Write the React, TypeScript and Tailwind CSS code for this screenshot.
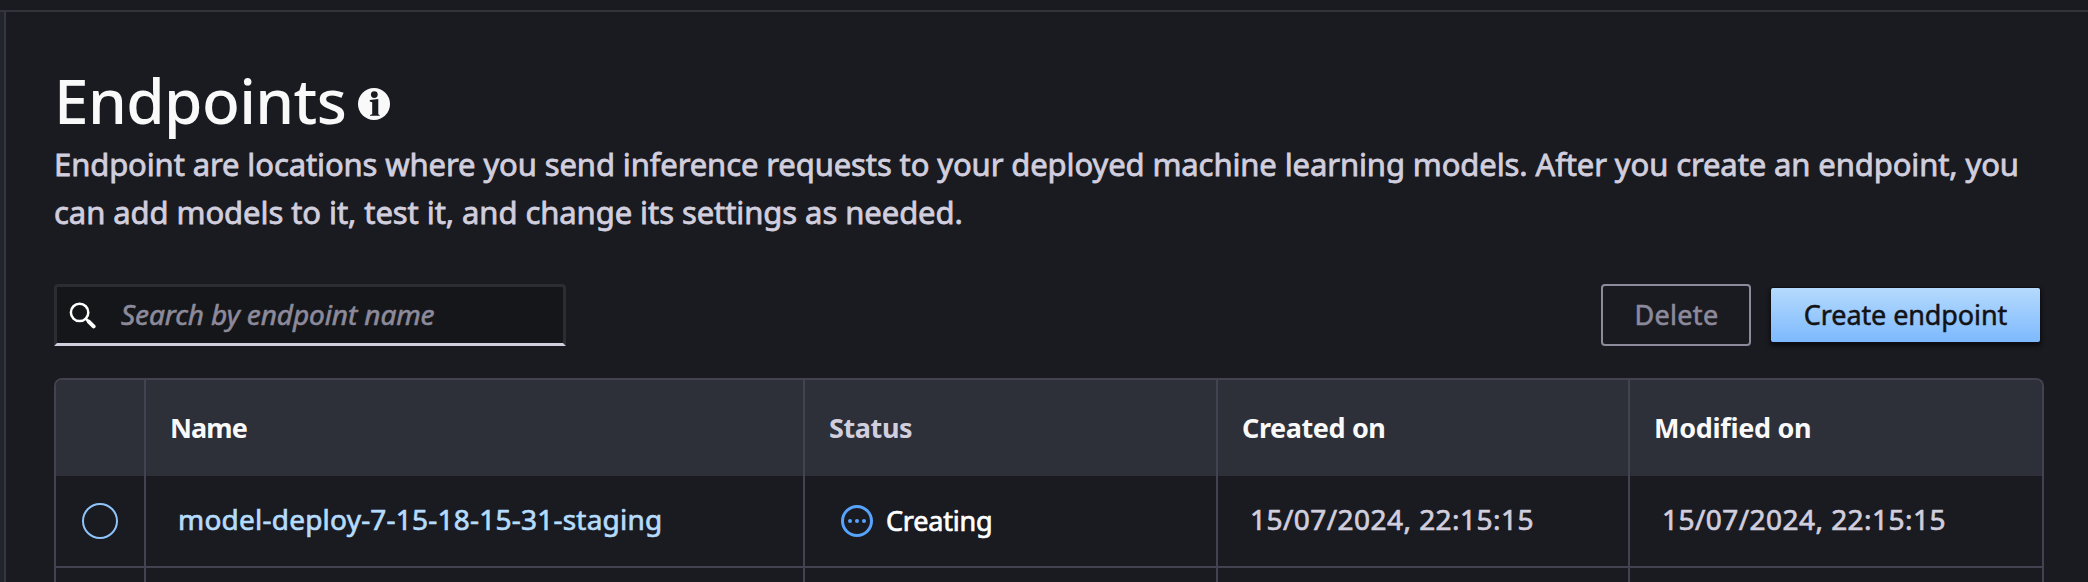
import type { ReactNode } from "react";

function InfoIcon() {
  return (
    <svg className="block h-8 w-8" viewBox="0 0 32 32" aria-hidden="true">
      <circle cx="16" cy="16" r="16" fill="#f9f9fa" />
      <circle cx="16.3" cy="6.6" r="3.4" fill="#1a1b20" />
      <path
        d="M11.8 12 L20.3 11 V26.2 L21.6 27 V27.8 H12 V27 L14.2 26.2 V14.2 L11.8 13.4 Z"
        fill="#1a1b20"
      />
    </svg>
  );
}

function SearchIcon() {
  return (
    <svg className="block h-7 w-7" viewBox="0 0 28 28" fill="none" stroke="#ffffff" aria-hidden="true">
      <circle cx="10.6" cy="11.4" r="8.7" strokeWidth="2.5" />
      <path d="M17 17.8 L19.5 20.3" strokeWidth="2.6" />
      <path d="M19.8 20.6 L24.6 25.4" strokeWidth="4" strokeLinecap="round" />
    </svg>
  );
}

function PendingIcon() {
  return (
    <svg className="block h-8 w-8" viewBox="0 0 32 32" aria-hidden="true">
      <circle cx="16" cy="16" r="14.5" fill="none" stroke="#58a3fb" strokeWidth="3" />
      <g fill="#58a3fb">
        <circle cx="9" cy="16" r="2" />
        <circle cx="16" cy="16" r="2" />
        <circle cx="23" cy="16" r="2" />
      </g>
    </svg>
  );
}

function Cell({ children, className = "" }: { children?: ReactNode; className?: string }) {
  return <div className={`flex items-center whitespace-nowrap border-l-2 border-[#424250] ${className}`}>{children}</div>;
}

const grid = "grid grid-cols-[88px_659px_413px_412px_414px]";

export default function App() {
  return (
    <div className="flex h-[582px] w-[2088px] flex-col overflow-hidden bg-[#1a1b20] font-['Noto_Sans',sans-serif]">
      <div className="h-3 shrink-0 border-b-2 border-[#33333b]" />
      <div className="flex min-h-0 flex-1">
        <div className="w-1.5 shrink-0 border-r-2 border-[#363640] bg-[#22242c]" />
        <main className="flex w-[2038px] flex-col pl-12 pt-[58px]">
          <div className="flex h-[60px] shrink-0 items-center">
            <h1 className="w-[304px] whitespace-nowrap text-[62px] font-medium leading-[60px] tracking-[-0.6px] text-[#f9f9fa]">
              Endpoints
            </h1>
            <div className="pt-2">
              <InfoIcon />
            </div>
          </div>
          <p className="mt-2.5 whitespace-nowrap text-[31px] leading-[48px] text-[#d1cede] [-webkit-text-stroke:0.8px]">
            <span className="tracking-[-0.11px]">
              Endpoint are locations where you send inference requests to your deployed machine learning models. After you create an endpoint, you
            </span>
            <br />
            <span className="tracking-[-0.07px]">can add models to it, test it, and change its settings as needed.</span>
          </p>

          <div className="mt-12 flex h-[62px] shrink-0 items-start justify-between">
            <div className="flex h-[62px] w-[512px] items-center rounded-t border-[3px] border-[#2c2c33] border-b-[#d1cede] bg-[#151619] pl-3">
              <SearchIcon />
              <span className="pb-0.5 pl-6 text-[28px] italic tracking-[-0.1px] text-[#8c8a9b] [-webkit-text-stroke:0.6px]">
                Search by endpoint name
              </span>
            </div>
            <div className="flex items-start gap-5 pr-1">
              <button className="h-[62px] w-[150px] rounded border-2 border-[#8c8a9b] pl-px text-[27px] tracking-[0.3px] text-[#8c8a9b] [-webkit-text-stroke:0.6px]">
                Delete
              </button>
              <button className="mt-1 h-[54px] w-[269px] rounded-xs bg-linear-to-b from-[#b5dafd] to-[#7db9fd] text-[27px] tracking-[-0.1px] text-[#131316] shadow-[0_0_0_1px_#101014,0_3px_4px_1px_rgba(8,8,14,0.8)] [-webkit-text-stroke:0.5px]">
                Create endpoint
              </button>
            </div>
          </div>

          <div className="mt-8 h-[220px] shrink-0 overflow-hidden rounded-t-lg border-2 border-b-0 border-[#424250]">
            <div className={`${grid} h-24 bg-[#2e3039] text-[27px] font-bold text-[#f9f9fa]`}>
              <div />
              <Cell className="pl-6 tracking-[-0.9px]">Name</Cell>
              <Cell className="pl-6 tracking-[-0.4px] text-[#d1cede]">Status</Cell>
              <Cell className="pl-6 tracking-[-0.4px]">Created on</Cell>
              <Cell className="pl-6 tracking-[-0.3px]">Modified on</Cell>
            </div>
            <div className={`${grid} h-[92px] border-b-2 border-[#424250] text-[28px] text-[#d1cede] [-webkit-text-stroke:0.7px]`}>
              <div className="flex items-center justify-center">
                <span className="h-9 w-9 rounded-full border-2 border-[#8fc4fb]" />
              </div>
              <Cell className="pb-1 pl-8 tracking-[0.22px] text-[#b5dbfd]">model-deploy-7-15-18-15-31-staging</Cell>
              <Cell className="gap-[13px] pl-9 text-[27px] tracking-[-0.2px] text-white">
                <PendingIcon />
                <span>Creating</span>
              </Cell>
              <Cell className="pb-1 pl-8 tracking-[0.45px]">15/07/2024, 22:15:15</Cell>
              <Cell className="pb-1 pl-8 tracking-[0.45px]">15/07/2024, 22:15:15</Cell>
            </div>
            <div className={`${grid} h-[92px]`}>
              <div />
              <Cell />
              <Cell />
              <Cell />
              <Cell />
            </div>
          </div>
        </main>
      </div>
    </div>
  );
}
